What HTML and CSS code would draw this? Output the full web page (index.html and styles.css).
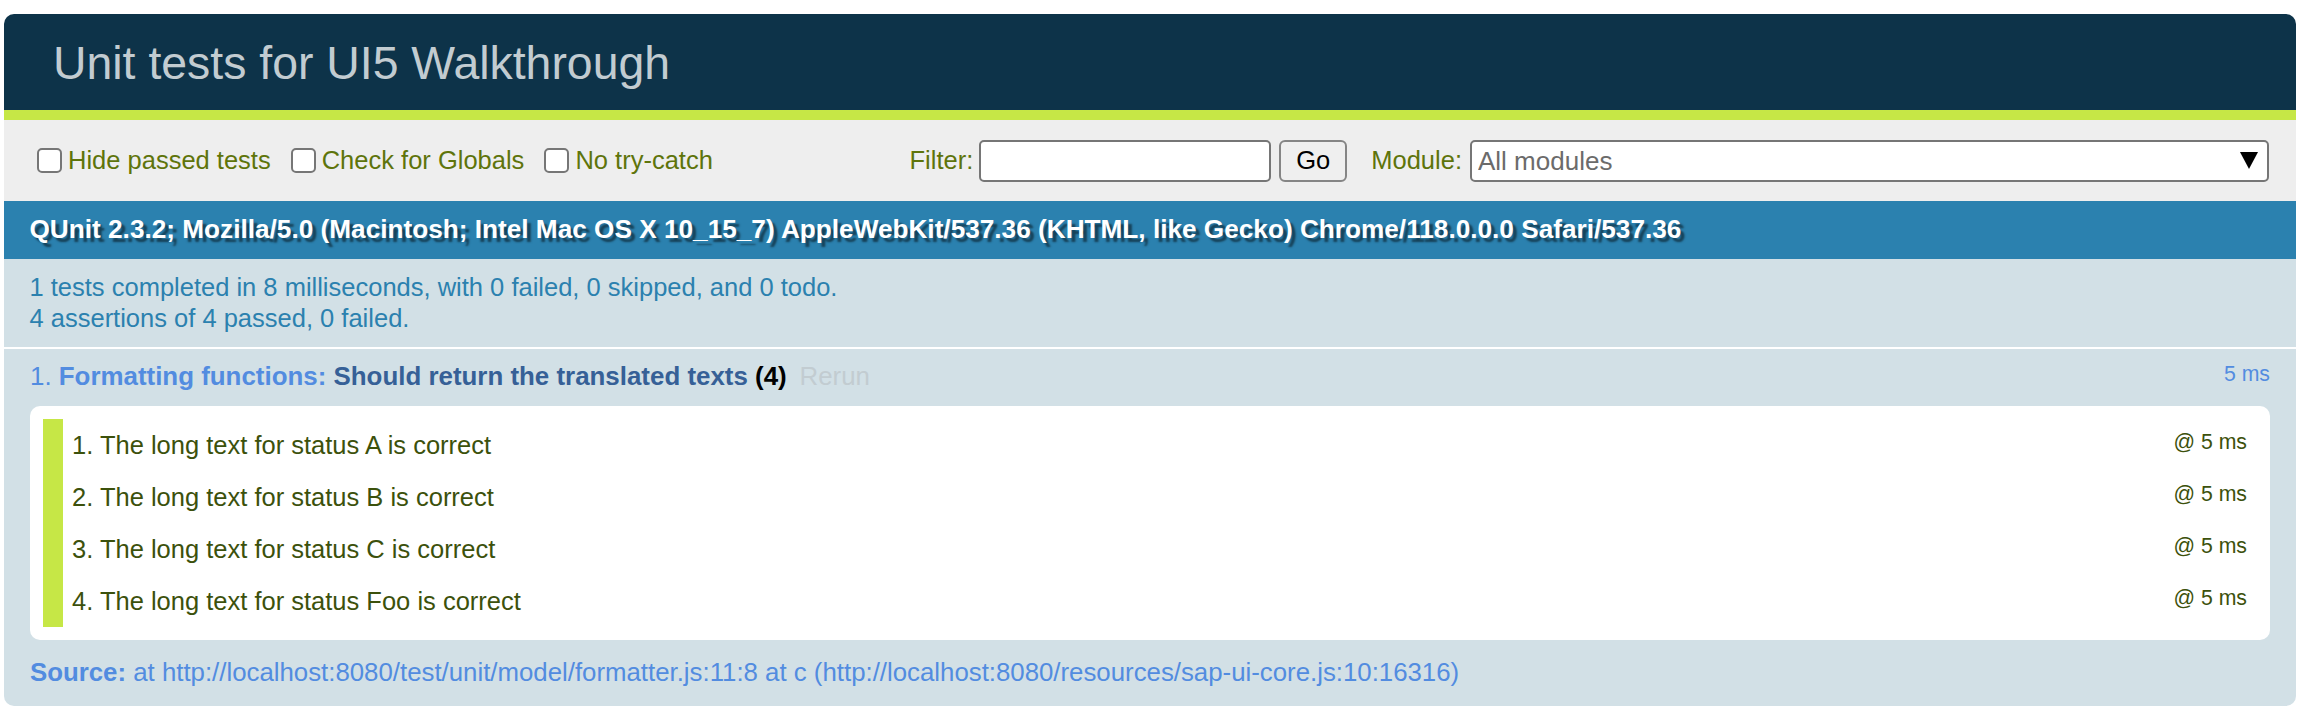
FILE: index.html
```html
<!DOCTYPE html>
<html>
<head>
<meta charset="utf-8">
<title>Unit tests for UI5 Walkthrough</title>
<link rel="stylesheet" href="styles.css">
</head>
<body>
<div class="qunit">
  <h1 class="header">Unit tests for UI5 Walkthrough</h1>
  <div class="banner"></div>
  <div class="toolbar">
    <label class="opt"><input type="checkbox" class="cb"><span>Hide passed tests</span></label>
    <label class="opt"><input type="checkbox" class="cb"><span>Check for Globals</span></label>
    <label class="opt"><input type="checkbox" class="cb"><span>No try-catch</span></label>
    <form class="filters">
      <label class="flabel" for="f">Filter:</label>
      <input id="f" type="text" class="finput">
      <button type="button" class="go">Go</button>
      <label class="flabel mod" for="m">Module:</label>
      <span class="selwrap"><select id="m" class="sel"><option>All modules</option></select></span>
    </form>
  </div>
  <h2 class="ua">QUnit 2.3.2; Mozilla/5.0 (Macintosh; Intel Mac OS X 10_15_7) AppleWebKit/537.36 (KHTML, like Gecko) Chrome/118.0.0.0 Safari/537.36</h2>
  <p class="result">1 tests completed in 8 milliseconds, with 0 failed, 0 skipped, and 0 todo.<br>4 assertions of 4 passed, 0 failed.</p>
  <ol class="tests">
    <li class="test">
      <div class="test-head">
        <strong class="title"><span class="num">1. </span><span class="module">Formatting functions:</span> <span class="tname">Should return the translated texts</span> <b class="counts">(4)</b></strong>
        <a class="rerun">Rerun</a>
        <span class="runtime">5 ms</span>
      </div>
      <ol class="asserts">
        <li class="assert"><span class="msg">1. The long text for status A is correct</span><span class="aruntime">@ 5 ms</span></li>
        <li class="assert"><span class="msg">2. The long text for status B is correct</span><span class="aruntime">@ 5 ms</span></li>
        <li class="assert"><span class="msg">3. The long text for status C is correct</span><span class="aruntime">@ 5 ms</span></li>
        <li class="assert"><span class="msg">4. The long text for status Foo is correct</span><span class="aruntime">@ 5 ms</span></li>
      </ol>
      <p class="source"><strong>Source:</strong> at http://localhost:8080/test/unit/model/formatter.js:11:8 at c (http://localhost:8080/resources/sap-ui-core.js:10:16316)</p>
    </li>
  </ol>
</div>
</body>
</html>
```

FILE: styles.css
```css
* { box-sizing: border-box; }

html, body {
  background: #fff;
}

body {
  margin: 14px 8px 0 4px;
  font-family: "Liberation Sans", Arial, sans-serif;
  font-size: 25.5px;
  line-height: 31.5px;
}

.qunit {
  display: flex;
  flex-direction: column;
}

.header {
  margin: 0;
  height: 96px;
  padding: 25px 0 23px 49px;
  font-size: 46.4px;
  line-height: 48px;
  font-weight: 400;
  color: #C2CCD1;
  background: #0D3349;
  border-radius: 10px 10px 0 0;
}

.banner {
  height: 10px;
  background: #C6E746;
}

.toolbar {
  height: 81px;
  display: flex;
  align-items: center;
  padding: 0 27px 0 33px;
  background: #EEE;
  color: #5E740B;
}

.opt {
  display: flex;
  align-items: center;
  margin-right: 20px;
}

.cb {
  appearance: none;
  -webkit-appearance: none;
  margin: 0 6px 0 0;
  width: 25px;
  height: 25px;
  border: 2px solid #767676;
  border-radius: 5px;
  background: #fff;
}

.filters {
  margin: 0 0 0 auto;
  display: flex;
  align-items: center;
}

.flabel {
  color: #5E740B;
  margin-right: 6px;
}

.flabel.mod {
  margin-left: 24px;
  margin-right: 8px;
}

.finput {
  width: 292px;
  height: 42px;
  margin: 0;
  border: 2px solid #767676;
  border-radius: 5px;
  background: #fff;
  font: inherit;
}

.go {
  width: 68px;
  height: 42px;
  margin: 0 0 0 8px;
  padding: 0;
  border: 2px solid #858585;
  border-radius: 6px;
  background: #EFEFEF;
  color: #000;
  font-family: "Liberation Sans", Arial, sans-serif;
  font-size: 25.5px;
}

.selwrap {
  position: relative;
  display: block;
}

.sel {
  appearance: none;
  -webkit-appearance: none;
  display: block;
  width: 799px;
  height: 42px;
  margin: 0;
  padding: 0 40px 0 6px;
  border: 2px solid #767676;
  border-radius: 5px;
  background: #fff;
  color: #6b6b6b;
  font-family: "Liberation Sans", Arial, sans-serif;
  font-size: 26px;
}

.selwrap::after {
  content: "";
  position: absolute;
  right: 11px;
  top: 12px;
  width: 0;
  height: 0;
  border-left: 9px solid transparent;
  border-right: 9px solid transparent;
  border-top: 17px solid #000;
}

.ua {
  margin: 0;
  padding: 13px 25.5px 13.5px;
  font-size: 26.2px;
  line-height: 31.5px;
  font-weight: 700;
  background: #2B81AF;
  color: #FFF;
  text-shadow: rgba(0, 0, 0, 0.5) 4px 4px 2px;
  white-space: nowrap;
}

.result {
  margin: 0;
  padding: 12.5px 25.5px;
  color: #2B81AF;
  background: #D2E0E6;
  border-bottom: 2px solid #FFF;
}

.tests {
  margin: 0;
  padding: 0;
  list-style: none;
}

.test {
  padding: 11.5px 26px 17.5px 26px;
  background: #D2E0E6;
  color: #528CE0;
  border-radius: 0 0 10px 10px;
}

.test-head {
  display: flex;
  align-items: flex-start;
}

.title {
  font-weight: 700;
  font-size: 25.9px;
}

.num {
  font-weight: 400;
  color: #528CE0;
}

.module {
  color: #528CE0;
}

.tname {
  color: #366097;
}

.counts {
  color: #000;
}

.rerun {
  padding: 0 12.75px;
  color: #C2CCD1;
  text-decoration: none;
  font-size: 25.9px;
}

.runtime {
  margin-left: auto;
  font-size: 21.25px;
  line-height: 27px;
  color: #528CE0;
}

.asserts {
  margin: 14px 0 0;
  padding: 13px;
  list-style: none;
  background: #FFF;
  border-radius: 10px;
}

.assert {
  display: flex;
  align-items: flex-start;
  padding: 10px 10px 10px 9px;
  line-height: 32px;
  color: #3C510C;
  background: #FFF;
  border-left: 20px solid #C6E746;
}

.aruntime {
  margin-left: auto;
  font-size: 21.25px;
  line-height: 27px;
}

.source {
  margin: 17px 0 0;
  font-size: 25.8px;
  color: #528CE0;
}

.source strong {
  font-weight: 700;
}
```
